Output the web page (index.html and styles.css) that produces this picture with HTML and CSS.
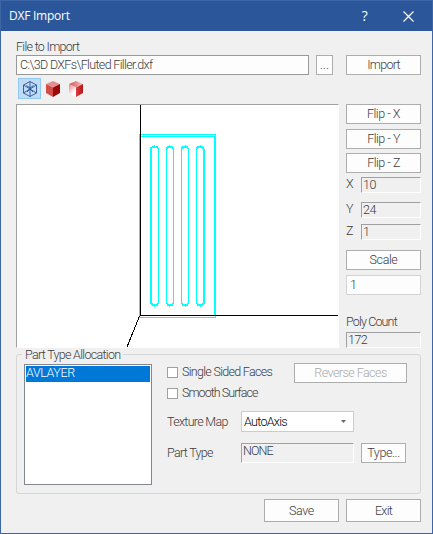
FILE: index.html
```html
<!DOCTYPE html>
<html lang="en">
<head>
<meta charset="utf-8">
<title>DXF Import</title>
<link rel="stylesheet" href="styles.css">
</head>
<body>
<div class="window">
  <header class="titlebar">
    <h1>DXF Import</h1>
    <span class="help">?</span>
    <svg class="close" width="11" height="11" viewBox="0 0 11 11"><path d="M.5.5l10 10M10.500 .5l-10 10" fill="none" stroke="#fff" stroke-width="1.2"/></svg>
  </header>
  <main>
    <label class="file-label">File to Import</label>
    <div class="file-row">
      <div class="input path">C:\3D DXFs\Fluted Filler.dxf</div>
      <button class="browse">...</button>
      <button>Import</button>
    </div>
    <div class="toolbar">
      <span class="tool active"><svg width="16" height="18" viewBox="0 0 16 18"><path d="M8 1.500l6.500 3.500v8L8 16.500 1.500 13V5zM8 1.500v15M1.500 5l13 8M14.500 5l-13 8M4.500 5.500L8 8l3.500-2.500M5 12l3-3 3 3" fill="none" stroke="#29549c" stroke-width=".9"/></svg></span>
      <span class="tool"><svg width="16" height="18" viewBox="0 0 16 18"><path d="M8 1l7 3-7 3.500L1 4z" fill="#e58e8e"/><path d="M1 4l7 3.500V17l-7-4z" fill="#d34c4c"/><path d="M15 4L8 7.500V17l7-4z" fill="#9c0808"/></svg></span>
      <span class="tool"><svg width="16" height="18" viewBox="0 0 16 18"><defs><linearGradient id="top" x1="0" x2="1"><stop offset="0" stop-color="#d85050"/><stop offset="1" stop-color="#f2c4c4"/></linearGradient><linearGradient id="left" x1="0" y1="0" x2=".6" y2="1"><stop offset="0" stop-color="#e68080"/><stop offset=".8" stop-color="#fff"/></linearGradient><linearGradient id="right" x1="0" x2="1"><stop offset="0" stop-color="#df3c3c"/><stop offset="1" stop-color="#b01818"/></linearGradient></defs><path d="M8 1l7 3-7 3.500L1 4z" fill="url(#top)"/><path d="M1 4l7 3.500V17l-7-4z" fill="url(#left)"/><path d="M15 4L8 7.500V17l7-4z" fill="url(#right)"/></svg></span>
    </div>
    <div class="work">
      <div class="viewport">
        <svg width="321" height="242" viewBox="17 105 321 242" shape-rendering="crispEdges" fill="none">
          <g stroke="#0ff">
            <path d="M139.500 317.500V134.500H215.500V317.500zM141 136.500H214.500V315"/>
            <path d="M150.500 149V303M151.500 148V303M158.500 149V303M166.500 148V303M173.500 148V303M181.500 148V303M188.500 148V303M196.500 149V303M203.500 148V303M204.500 149V303"/>
            <path stroke-width="2" d="M151 149v-1l2-1h4l1 2M167 149v-1l1-1h4l1 2M182 149v-1l1-1h4l1 2M197 149v-1l1-1h4l2 2M151 303l2 2h4l1-2M167 303l1 2h4l1-2M182 303l1 2h4l1-2M197 303l1 2h4l2-2"/>
            <path d="M154.500 145v2M169.500 145v2M185.500 145v2M200.500 145v2M154.500 305v2M169.500 305v2M185.500 305v2M200.500 305v2"/>
          </g>
          <path stroke="#000" d="M140.500 105V315.500H338M139.500 316L127 347"/>
        </svg>
      </div>
      <div class="side">
        <button class="flip">Flip - X</button>
        <button class="flip y">Flip - Y</button>
        <button class="flip z">Flip - Z</button>
        <div class="dim dx"><span>X</span><div class="sunken">10</div></div>
        <div class="dim dy"><span>Y</span><div class="sunken">24</div></div>
        <div class="dim dz"><span>Z</span><div class="sunken">1</div></div>
        <button class="scale">Scale</button>
        <div class="input factor">1</div>
        <label class="poly">Poly Count</label>
        <div class="sunken">172</div>
      </div>
    </div>
    <section class="group">
      <h2>Part Type Allocation</h2>
      <div class="list"><div class="item">AVLAYER</div></div>
      <div class="options">
        <div class="faces">
          <div class="checks">
            <label class="check"><i></i><span>Single Sided Faces</span></label>
            <label class="check"><i></i><span>Smooth Surface</span></label>
          </div>
          <button class="reverse" disabled>Reverse Faces</button>
        </div>
        <div class="field texture"><label>Texture Map</label><div class="combo">AutoAxis<svg width="5" height="3" viewBox="0 0 5 3"><path d="M0 0h5L2.500 3z" fill="#666"/></svg></div></div>
        <div class="field"><label>Part Type</label><div class="sunken type-name">NONE</div><button class="type">Type...</button></div>
      </div>
    </section>
    <footer><button class="save">Save</button><button>Exit</button></footer>
  </main>
</div>
</body>
</html>
```
FILE: styles.css
```css
* { box-sizing: border-box; }
body { margin: 0; }
.window {
  width: 433px;
  height: 534px;
  border: 1px solid #3c66a8;
  background: #f0f0f0;
  color: #3c3c3c;
  font: 300 12.5px/14px Roboto, sans-serif;
  letter-spacing: -0.7px;
  white-space: nowrap;
  overflow: hidden;
}
.titlebar {
  display: flex;
  align-items: center;
  height: 30px;
  padding: 0 18px 0 8px;
  background: #2b579a;
  color: #fff;
}
h1 { margin: 0; flex: 1; font: 400 12px/16px "Open Sans", sans-serif; letter-spacing: -0.25px; }
.help { font: 400 14px/16px "Open Sans", sans-serif; margin-right: 36px; }
.close { display: block; }
main { padding: 9px 11px 0 15px; }
label, h2 { display: block; font: inherit; }
.file-label { margin-bottom: 1px; }
button {
  width: 75px;
  height: 20px;
  padding: 0;
  border: 1px solid #adadad;
  background: #fdfdfd;
  color: #3c3c3c;
  font: inherit;
  letter-spacing: inherit;
  display: block;
}
.input { border: 1px solid #999; background: #fdfdfd; height: 20px; padding: 2px 3px; }
.file-row { display: flex; height: 20px; }
.path { width: 293px; margin-right: 7px; letter-spacing: -0.65px; }
.browse { width: 17px; margin-right: 13px; letter-spacing: 0; }
.toolbar { display: flex; height: 21px; margin: 3px 0 5px 2px; }
.tool { width: 23px; height: 21px; display: grid; place-items: center; }
.tool.active { background: #c0dcf3; border: 1px solid #90c8f6; }
.work { display: flex; gap: 7px; height: 244px; }
.viewport { width: 323px; border: 1px solid; border-color: #a0a0a0 #fff #fff #a0a0a0; background: #fff; }
.viewport svg { display: block; }
.side { width: 75px; }
.flip { letter-spacing: -0.5px; }
.y { margin-top: 5px; }
.z { margin-top: 4px; }
.sunken { height: 16px; padding-left: 1px; border: 1px solid; border-color: #a0a0a0 #fff #fff #a0a0a0; letter-spacing: -0.5px; }
.dim { display: flex; }
.dim span { width: 15px; }
.dim .sunken { flex: 1; }
.dx { margin-top: 4px; }
.dy { margin-top: 9px; }
.dz { margin-top: 6px; }
.scale { margin-top: 10px; letter-spacing: -0.4px; }
.factor { margin-top: 5px; border-color: #d4d4d4; }
.poly { margin: 20px 0 3px; letter-spacing: -0.85px; }
.group {
  display: flex;
  position: relative;
  width: 405px;
  height: 140px;
  margin-top: 6px;
  padding: 9px 0 0 7px;
  border: 1px solid #d6d6d6;
  border-radius: 3px;
}
h2 { position: absolute; top: -7px; left: 5px; margin: 0; padding: 0 3px; background: #f0f0f0; }
.list { width: 128px; height: 121px; padding: 1px; border: 1px solid #828790; background: #fff; }
.item { height: 16px; background: #0078d7; color: #fff; letter-spacing: -0.4px; }
.options { margin-left: 15px; }
.faces { display: flex; height: 47px; }
.checks { width: 127px; padding-top: 2px; }
.check { display: flex; gap: 4px; height: 21px; }
.check i { width: 11px; height: 11px; margin-top: 1px; border: 1px solid #a0a0a0; background: #fff; }
.check span { margin-top: -1px; }
.check + .check { letter-spacing: -0.95px; }
.reverse { width: 113px; color: #aaa; margin-top: -1px; letter-spacing: -0.55px; }
.field { display: flex; align-items: center; height: 21px; }
.field label { width: 74px; }
.texture { margin-bottom: 10px; }
.combo { display: flex; align-items: center; justify-content: space-between; width: 113px; height: 21px; padding: 0 7px 0 2px; border: 1px solid #ccc; background: #fff; color: #000; }
.type-name { width: 113px; height: 20px; margin-right: 7px; letter-spacing: -0.9px; }
.type { width: 45px; letter-spacing: -0.4px; }
.save { letter-spacing: -0.4px; }
footer { display: flex; justify-content: flex-end; gap: 7px; margin-top: 5px; }
footer button { height: 23px; }
```
